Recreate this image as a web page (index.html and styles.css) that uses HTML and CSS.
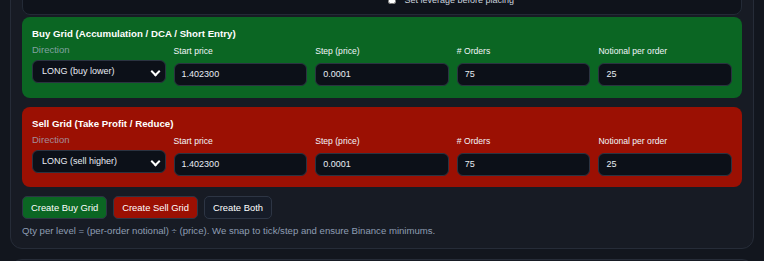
FILE: index.html
```html
<!DOCTYPE html>
<html lang="en">
<head>
    <meta charset="UTF-8">
    <title>Grid Orders</title>
    <link rel="stylesheet" href="styles.css">
</head>
<body>
    <div class="page">
        <section class="card">
            <!-- Leverage panel (scrolled mostly out of view) -->
            <div class="panel panel-dark">
                <div class="lev-row">
                    <label class="check"><input type="checkbox"> Set leverage before placing</label>
                </div>
            </div>

            <!-- Buy grid -->
            <div class="panel panel-buy">
                <div class="panel-title">Buy Grid (Accumulation / DCA / Short Entry)</div>
                <div class="grid-form">
                    <div class="field field-dir">
                        <label class="muted">Direction</label>
                        <div class="select">LONG (buy lower)<span class="chev"></span></div>
                    </div>
                    <div class="field">
                        <label>Start price</label>
                        <div class="input">1.402300</div>
                    </div>
                    <div class="field">
                        <label>Step (price)</label>
                        <div class="input">0.0001</div>
                    </div>
                    <div class="field">
                        <label># Orders</label>
                        <div class="input">75</div>
                    </div>
                    <div class="field">
                        <label>Notional per order</label>
                        <div class="input">25</div>
                    </div>
                </div>
            </div>

            <!-- Sell grid -->
            <div class="panel panel-sell">
                <div class="panel-title">Sell Grid (Take Profit / Reduce)</div>
                <div class="grid-form">
                    <div class="field field-dir">
                        <label class="muted">Direction</label>
                        <div class="select">LONG (sell higher)<span class="chev"></span></div>
                    </div>
                    <div class="field">
                        <label>Start price</label>
                        <div class="input">1.402300</div>
                    </div>
                    <div class="field">
                        <label>Step (price)</label>
                        <div class="input">0.0001</div>
                    </div>
                    <div class="field">
                        <label># Orders</label>
                        <div class="input">75</div>
                    </div>
                    <div class="field">
                        <label>Notional per order</label>
                        <div class="input">25</div>
                    </div>
                </div>
            </div>

            <div class="actions">
                <button class="btn btn-buy">Create Buy Grid</button>
                <button class="btn btn-sell">Create Sell Grid</button>
                <button class="btn">Create Both</button>
            </div>
            <p class="hint">Qty per level = (per-order notional) ÷ (price). We snap to tick/step and ensure Binance minimums.</p>
        </section>

        <section class="card card-next"></section>
    </div>
</body>
</html>
```

FILE: styles.css
```css
body {
    margin: 0;
    background-color: #12161e;
    font-family: 'Liberation Sans', Arial, sans-serif;
    color: #e6ebf2;
    overflow: hidden;
}

.page {
    padding: 0 10px;
    margin-top: -40px;
}

.card {
    background-color: #171b24;
    border: 1px solid #262c38;
    border-radius: 12px;
    padding: 11px 11px 11px;
}

.card-next {
    margin-top: 10px;
    height: 60px;
}

.panel {
    border-radius: 8px;
    padding: 10px 10px 12px;
}

.panel-dark {
    background-color: #0f131b;
    border: 1px solid #232a36;
    padding: 21px 10px 8px;
    margin-bottom: 2px;
}

.lev-row {
    padding-left: 355px;
    font-size: 9px;
    line-height: 12px;
    color: #c9d1dc;
}

.check input {
    width: 8px;
    height: 8px;
    margin: 0 6px 0 0;
    vertical-align: -1px;
}

.panel-buy {
    background-color: #0b6623;
    margin-bottom: 9px;
}

.panel-sell {
    background-color: #9b1003;
    padding-bottom: 11px;
}

.panel-title {
    font-size: 9.7px;
    font-weight: bold;
    line-height: 13px;
    color: #fff;
}

.grid-form {
    display: grid;
    grid-template-columns: repeat(5, 1fr);
    gap: 8px;
    margin-top: 3px;
}

.field {
    display: flex;
    flex-direction: column;
    gap: 5px;
    padding-top: 2px;
}

.field label {
    font-size: 8.6px;
    line-height: 13px;
    color: #f2f5f9;
}

.field-dir {
    padding-top: 0;
    gap: 4px;
}

.field-dir .muted {
    font-size: 9.5px;
    color: #a8b6c8;
    opacity: 0.75;
}

.input,
.select {
    height: 23px;
    box-sizing: border-box;
    background-color: #0c1018;
    border: 1px solid #2b3341;
    border-radius: 6px;
    padding: 0 7px;
    font-size: 9px;
    line-height: 21px;
    color: #e8edf4;
}

.select {
    position: relative;
    padding-left: 9px;
}

.chev {
    position: absolute;
    right: 6px;
    top: 7px;
    width: 5px;
    height: 5px;
    border-right: 2px solid #fff;
    border-bottom: 2px solid #fff;
    transform: rotate(45deg);
}

.actions {
    display: flex;
    gap: 6px;
    margin-top: 9px;
}

.btn {
    height: 23px;
    padding: 0 8px;
    background-color: #161c28;
    border: 1px solid #2d3544;
    border-radius: 5px;
    color: #fff;
    font-family: 'Liberation Sans', Arial, sans-serif;
    font-size: 9.4px;
}

.btn-buy {
    background-color: #0b6623;
}

.btn-sell {
    background-color: #9b1003;
}

.hint {
    margin: 6px 0 0;
    font-size: 9.6px;
    line-height: 12px;
    color: #8e9db3;
}
```
